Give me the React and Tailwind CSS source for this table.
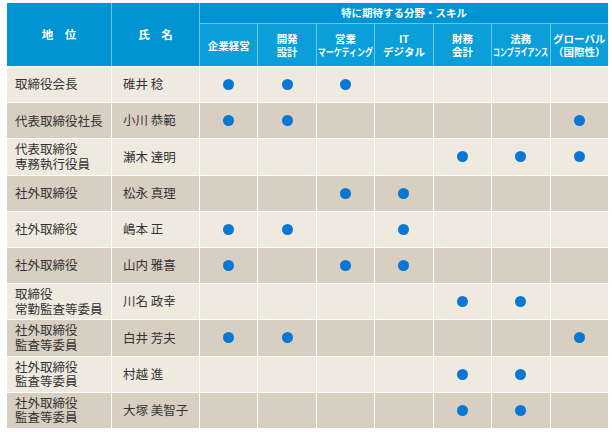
import React from 'react';

const SKILLS = [
  { key: 'mgmt', lines: ['企業経営'] },
  { key: 'dev', lines: ['開発', '設計'] },
  { key: 'sales', lines: ['営業', 'マーケティング'] },
  { key: 'it', lines: ['IT', 'デジタル'] },
  { key: 'fin', lines: ['財務', '会計'] },
  { key: 'law', lines: ['法務', 'コンプライアンス'] },
  { key: 'global', lines: ['グローバル', '（国際性）'] },
];

// katakana lines squeezed horizontally, as in the printed table
const SQUEEZE = {
  sales: 'scale-x-[0.76]',
  law: 'scale-x-[0.66]',
};

const MEMBERS = [
  { role: ['取締役会長'], name: '碓井 稔', skills: ['mgmt', 'dev', 'sales'] },
  { role: ['代表取締役社長'], name: '小川 恭範', skills: ['mgmt', 'dev', 'global'] },
  { role: ['代表取締役', '専務執行役員'], name: '瀬木 達明', skills: ['fin', 'law', 'global'] },
  { role: ['社外取締役'], name: '松永 真理', skills: ['sales', 'it'] },
  { role: ['社外取締役'], name: '嶋本 正', skills: ['mgmt', 'dev', 'it'] },
  { role: ['社外取締役'], name: '山内 雅喜', skills: ['mgmt', 'sales', 'it'] },
  { role: ['取締役', '常勤監査等委員'], name: '川名 政幸', skills: ['fin', 'law'] },
  { role: ['社外取締役', '監査等委員'], name: '白井 芳夫', skills: ['mgmt', 'dev', 'global'] },
  { role: ['社外取締役', '監査等委員'], name: '村越 進', skills: ['fin', 'law'] },
  { role: ['社外取締役', '監査等委員'], name: '大塚 美智子', skills: ['fin', 'law'] },
];

const COLS = 'grid grid-cols-[104px_87px_repeat(7,minmax(0,1fr))] gap-px';

function Dot() {
  return <span className="block w-[11px] h-[11px] rounded-full bg-[#0a77d5]" />;
}

export default function App() {
  return (
    <div
      className="w-[612px] h-[432px] bg-white pl-[7px] pr-[4px] pt-[3px] text-[#333]"
      style={{ fontFamily: '"Noto Sans CJK JP", "Noto Sans", sans-serif' }}
    >
      {/* header */}
      <div className={`${COLS} grid-rows-[20px_42px] bg-[#66c5ec] text-white font-bold`}>
        <div className="row-span-2 bg-[#0095d2] flex items-center justify-center text-[11.5px]">地　位</div>
        <div className="row-span-2 bg-[#0095d2] flex items-center justify-center text-[11.5px]">氏　名</div>
        <div className="col-span-7 bg-[#0095d2] flex items-center justify-center text-[10.5px]">
          特に期待する分野・スキル
        </div>
        {SKILLS.map(s => (
          <div key={s.key} className="bg-[#0a9fd9] flex flex-col items-center justify-center text-[10.5px] leading-[13px]">
            {s.lines.map((l, i) => (
              <span
                key={i}
                className={`whitespace-nowrap inline-block ${i === 1 && SQUEEZE[s.key] ? SQUEEZE[s.key] : ''}`}
              >
                {l}
              </span>
            ))}
          </div>
        ))}
      </div>

      {/* body */}
      <div className={`${COLS} bg-white mt-px`}>
        {MEMBERS.map((m, r) => {
          const bg = r % 2 === 0 ? 'bg-[#eeeadf]' : 'bg-[#d8cfc2]';
          return (
            <React.Fragment key={r}>
              <div className={`${bg} h-[35.2px] flex flex-col justify-center pl-[8px] text-[12.5px] leading-[14.5px]`}>
                {m.role.map((l, i) => <span key={i} className="whitespace-nowrap">{l}</span>)}
              </div>
              <div className={`${bg} h-[35.2px] flex items-center pl-[11px] text-[12.5px] whitespace-nowrap`}>
                {m.name}
              </div>
              {SKILLS.map(s => (
                <div key={s.key} className={`${bg} h-[35.2px] flex items-center justify-center`}>
                  {m.skills.includes(s.key) && <Dot />}
                </div>
              ))}
            </React.Fragment>
          );
        })}
      </div>
    </div>
  );
}
